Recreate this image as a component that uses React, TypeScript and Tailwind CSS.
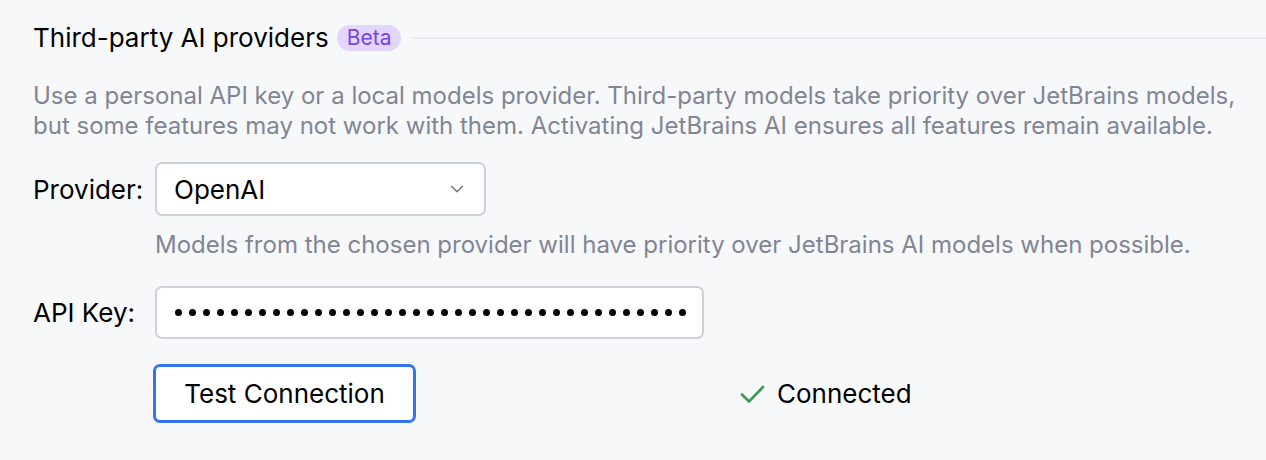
import { ChevronDown } from "lucide-react";

const font = { fontFamily: "Inter, 'Noto Sans', sans-serif" };

function Dots({ count }: { count: number }) {
  return (
    <div className="flex items-center gap-[7px]">
      {Array.from({ length: count }).map((_, i) => (
        <span key={i} className="block h-[7px] w-[7px] rounded-full bg-black" />
      ))}
    </div>
  );
}

export default function App() {
  return (
    <div
      className="h-[460px] w-[1266px] overflow-hidden bg-[#f7f8fa] text-black"
      style={font}
    >
      <div className="pl-[33px] pt-[23px]">
        {/* header */}
        <div className="flex items-center">
          <span className="text-[26px] leading-[30px]">Third-party AI providers</span>
          <span className="ml-[8px] rounded-[13px] bg-[#e2d6fc] px-[10px] text-[21px] leading-[26px] text-[#7845de]">
            Beta
          </span>
          <div className="ml-[10px] h-[2px] flex-1 bg-[#ebecf0]" />
        </div>

        {/* description */}
        <p className="mt-[28px] text-[24px] leading-[30px] text-[#818594]">
          Use a personal API key or a local models provider. Third-party models take priority over JetBrains models,
          <br />
          but some features may not work with them. Activating JetBrains AI ensures all features remain available.
        </p>

        {/* provider */}
        <div className="mt-[21px] flex items-center">
          <span className="w-[122px] text-[26px]">Provider:</span>
          <div className="flex h-[54px] w-[331px] items-center justify-between rounded-[7px] border-2 border-[#cfd1d9] bg-white pl-[17px] pr-[16px]">
            <span className="text-[26px]">OpenAI</span>
            <ChevronDown className="h-[22px] w-[22px] text-[#6c707e]" strokeWidth={1.5} />
          </div>
        </div>
        <p className="ml-[122px] mt-[14px] text-[24px] leading-[30px] text-[#818594]">
          Models from the chosen provider will have priority over JetBrains AI models when possible.
        </p>

        {/* api key */}
        <div className="mt-[26px] flex items-center">
          <span className="w-[122px] text-[26px]">API Key:</span>
          <div className="flex h-[53px] w-[549px] items-center rounded-[7px] border-2 border-[#cfd1d9] bg-white pl-[18px]">
            <Dots count={37} />
          </div>
        </div>

        {/* test connection */}
        <div className="mt-[25px] flex items-center">
          <button className="ml-[120px] h-[59px] w-[263px] rounded-[7px] border-[3px] border-[#3574f0] bg-white text-[26px]">
            Test Connection
          </button>
          <div className="ml-[324px] flex items-center gap-[12px]">
            <svg width="25" height="20" viewBox="0 0 25 20" fill="none">
              <path d="M2 10.5 L9 17.5 L23 3" stroke="#3d9a50" strokeWidth="2.6" strokeLinecap="round" strokeLinejoin="round" />
            </svg>
            <span className="text-[26px]">Connected</span>
          </div>
        </div>
      </div>
    </div>
  );
}
